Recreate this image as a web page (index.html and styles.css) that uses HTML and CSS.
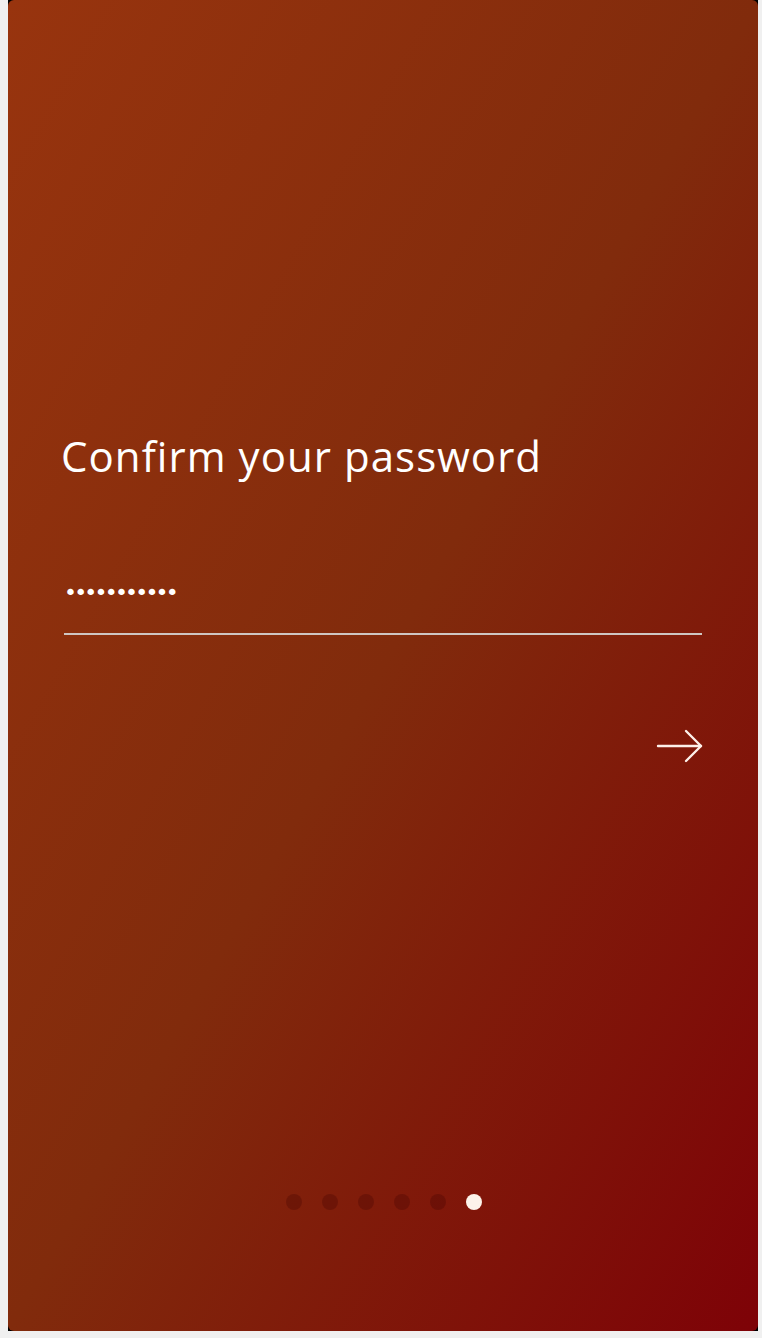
FILE: index.html
```html
<!DOCTYPE html>
<html>
<head>
<meta charset="utf-8">
<link rel="stylesheet" href="styles.css">
</head>
<body>
<div class="frame">
  <div class="card">
    <div class="content">
      <h1 class="title">Confirm your password</h1>
      <div class="field">
        <span class="dots">•••••••••••</span>
      </div>
      <div class="actions">
        <svg class="arrow" width="48" height="36" viewBox="0 0 48 36" fill="none" stroke="#fdf0ea" stroke-width="2.4" stroke-linecap="round" stroke-linejoin="round">
          <line x1="2" y1="18" x2="45" y2="18"/>
          <polyline points="30,3 45,18 30,33"/>
        </svg>
      </div>
    </div>
    <div class="pager">
      <span class="pdot"></span>
      <span class="pdot"></span>
      <span class="pdot"></span>
      <span class="pdot"></span>
      <span class="pdot"></span>
      <span class="pdot active"></span>
    </div>
  </div>
</div>
</body>
</html>
```

FILE: styles.css
```css
html, body {
  margin: 0;
  padding: 0;
  background: #f0f0f0;
}
body {
  padding: 0 4px 0 8px;
}
.frame {
  width: 750px;
  height: 1331px;
  background: #000;
}
.card {
  width: 100%;
  height: 100%;
  border-radius: 6px;
  background: linear-gradient(to bottom right, #98340e 0%, #812b0c 50%, #7e0207 100%);
  display: flex;
  flex-direction: column;
  box-sizing: border-box;
}
.content {
  flex: 1;
  padding: 428px 56px 0 53px;
}
.title {
  margin: 0;
  font-family: "Open Sans", sans-serif;
  font-weight: 400;
  font-size: 42px;
  line-height: 56px;
  color: #ffffff;
  letter-spacing: 1.05px;
}
.field {
  margin: 89px 0 0 3px;
  height: 60px;
  border-bottom: 2px solid #cfc6c2;
  display: flex;
  align-items: flex-start;
}
.dots {
  font-family: "DejaVu Sans", sans-serif;
  font-size: 22px;
  color: #fff;
  letter-spacing: -2.8px;
  line-height: 28px;
  margin-top: 6px;
}
.actions {
  display: flex;
  justify-content: flex-end;
  margin-top: 93px;
}
.arrow {
  display: block;
  margin-right: -2px;
}
.pager {
  display: flex;
  justify-content: center;
  gap: 20px;
  padding: 0 0 121px 2px;
}
.pdot {
  width: 16px;
  height: 16px;
  border-radius: 50%;
  background: rgba(60, 0, 0, 0.28);
}
.pdot.active {
  background: #fdf3ea;
}
```
